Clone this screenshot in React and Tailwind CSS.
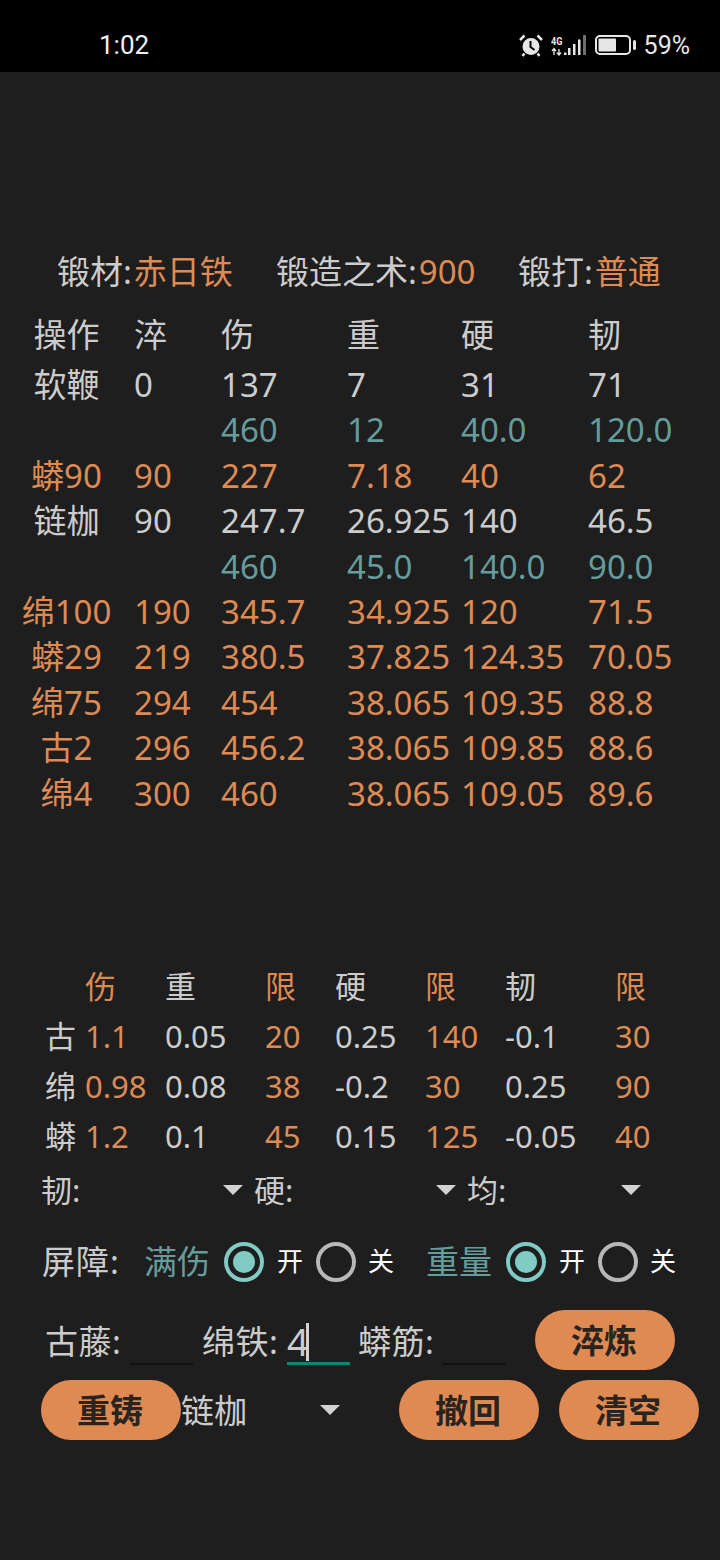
const white = "text-[#cccccc]";
const orange = "text-[#de8a52]";
const teal = "text-[#659c9c]";

const rows = [
  { color: white, h: "h-[50px]", cells: ["操作", "淬", "伤", "重", "硬", "韧"] },
  { color: white, cells: ["软鞭", "0", "137", "7", "31", "71"] },
  { color: teal, cells: ["", "", "460", "12", "40.0", "120.0"] },
  { color: orange, cells: ["蟒90", "90", "227", "7.18", "40", "62"] },
  { color: white, cells: ["链枷", "90", "247.7", "26.925", "140", "46.5"] },
  { color: teal, cells: ["", "", "460", "45.0", "140.0", "90.0"] },
  { color: orange, cells: ["绵100", "190", "345.7", "34.925", "120", "71.5"] },
  { color: orange, cells: ["蟒29", "219", "380.5", "37.825", "124.35", "70.05"] },
  { color: orange, cells: ["绵75", "294", "454", "38.065", "109.35", "88.8"] },
  { color: orange, cells: ["古2", "296", "456.2", "38.065", "109.85", "88.6"] },
  { color: orange, cells: ["绵4", "300", "460", "38.065", "109.05", "89.6"] },
];

const limits = [
  ["", "伤", "重", "限", "硬", "限", "韧", "限"],
  ["古", "1.1", "0.05", "20", "0.25", "140", "-0.1", "30"],
  ["绵", "0.98", "0.08", "38", "-0.2", "30", "0.25", "90"],
  ["蟒", "1.2", "0.1", "45", "0.15", "125", "-0.05", "40"],
];

function StatusIcons() {
  return (
    <div className="flex items-center">
      <svg width="24" height="23" viewBox="0 0 24 23" className="mr-[8px]">
        <circle cx="12" cy="12.500" r="8.500" fill="#e6e6e6" />
        <path d="M11.500 7v6l4 3" stroke="#000" strokeWidth="2" fill="none" />
        <path d="M1 6l4.500-4.500M23 6l-4.500-4.500M5.500 19.500l-2 2.500M18.500 19.500l2 2.500" stroke="#e6e6e6" strokeWidth="2.500" fill="none" />
      </svg>
      <svg width="35" height="21" viewBox="0 0 35 21" className="mr-[9px]">
        <text x="0" y="9.500" fontSize="11" fontWeight="700" fill="#e6e6e6" textLength="11.500" lengthAdjust="spacingAndGlyphs" fontFamily="Roboto, sans-serif">4G</text>
        <path d="M3 20v-6M1 16l2-2.500 2 2.500M8 14v6M6 17.500l2 2.500 2-2.500" stroke="#e6e6e6" strokeWidth="1.300" fill="none" />
        <rect x="13" y="17.500" width="2.500" height="2.500" fill="#e6e6e6" />
        <rect x="17" y="13" width="2.500" height="7" fill="#e6e6e6" />
        <rect x="22" y="9" width="2.500" height="11" fill="#e6e6e6" />
        <rect x="27" y="4.500" width="2.500" height="15.500" fill="#e6e6e6" />
        <rect x="32" y="0" width="3" height="20" fill="#6e6e6e" />
      </svg>
      <svg width="41" height="20" viewBox="0 0 41 20" className="mr-[8px]">
        <rect x="1" y="1" width="34" height="18" rx="4" fill="none" stroke="#e6e6e6" strokeWidth="2" />
        <rect x="3.500" y="3.500" width="17.500" height="13" rx="1" fill="#e6e6e6" />
        <rect x="38" y="5" width="3" height="10" rx="1.500" fill="#e6e6e6" />
      </svg>
      <span className="text-[25px] leading-none text-[#e6e6e6] font-['Roboto',sans-serif]">59%</span>
    </div>
  );
}

function Caret({ className }) {
  return <div className={`w-0 h-0 border-x-[10px] border-x-transparent border-t-[10px] border-t-[#d2d2d2] ${className}`} />;
}

function Radio({ on }) {
  return (
    <div className={`w-[40px] h-[40px] rounded-full border-[4px] flex items-center justify-center ${on ? "border-[#80cbc4]" : "border-[#b8b8b8]"}`}>
      {on && <div className="w-[22px] h-[22px] rounded-full bg-[#80cbc4]" />}
    </div>
  );
}

function Field({ label, value, active, className }) {
  return (
    <div className={`flex items-center ${className}`}>
      <span className={`w-[84px] text-[33px] leading-[40px] ${white} mt-[4px] tracking-[0.5px] -ml-[1px] mr-[1px]`}>{label}</span>
      <div className={`relative w-[63px] h-[44px] mt-[6px] text-[38px] leading-[40px] ${white} ${active ? "border-b-[3px] border-[#12857a]" : "border-b-2 border-[#111111]"}`}>
        {value}
        {active && <div className="absolute left-[19px] top-[2px] w-[3px] h-[38px] bg-[#d2d2d2]" />}
      </div>
    </div>
  );
}

function Btn({ children, className }) {
  return (
    <div className={`w-[140px] h-[60px] rounded-full bg-[#de8a52] flex items-center justify-center pt-[2px] pr-[2px] text-[33px] font-bold text-[#292420] ${className}`}>
      {children}
    </div>
  );
}

export default function App() {
  return (
    <div className="w-[720px] h-[1560px] bg-[#1e1e1e] font-['Noto_Sans','Noto_Sans_CJK_SC',sans-serif] font-normal">
      <div className="h-[72px] bg-black flex items-center justify-between pl-[99px] pr-[30px] pt-[18px]">
        <span className="text-[26px] text-[#f0f0f0] font-['Roboto',sans-serif] font-normal mt-[1px]">1:02</span>
        <StatusIcons />
      </div>

      <div className={`pt-[177px] pl-[57px] flex text-[33px] leading-[45px] ${white}`}>
        <div className="w-[219px]">锻材:<span className={`ml-[2px] ${orange}`}>赤日铁</span></div>
        <div className="w-[242px]">锻造之术:<span className={`ml-[2px] ${orange}`}>900</span></div>
        <div>锻打:<span className={`ml-[2px] ${orange}`}>普通</span></div>
      </div>

      <div className="mt-[16px] text-[33px]">
        {rows.map((row, i) => (
          <div key={i} className={`grid grid-cols-[134px_87px_126px_114px_127px_1fr] items-center ${row.h || "h-[45.4px]"} ${row.color}`}>
            {row.cells.map((c, j) => (
              <div key={j} className={`whitespace-nowrap ${j === 0 ? "text-center pr-[1px]" : ""}`}>{c}</div>
            ))}
          </div>
        ))}
      </div>

      <div className="mt-[147px] ml-[45px] text-[31px]">
        {limits.map((row, i) => (
          <div key={i} className="grid grid-cols-[40px_80px_100px_70px_90px_80px_110px_1fr] items-center h-[50px]">
            {row.map((c, j) => (
              <div key={j} className={j === 1 || j === 3 || j === 5 || j === 7 ? orange : white}>{c}</div>
            ))}
          </div>
        ))}
      </div>

      <div className={`flex items-center h-[44px] mt-[7px] pl-[41px] text-[31px] ${white}`}>
        <span className="w-[182px]">韧:</span>
        <Caret />
        <span className="w-[182px] ml-[11px]">硬:</span>
        <Caret />
        <span className="w-[154px] ml-[11px]">均:</span>
        <Caret />
      </div>

      <div className="flex items-center h-[50px] mt-[25px] pl-[42px] text-[33px]">
        <span className={`w-[102px] tracking-[1px] ${white}`}>屏障:</span>
        <span className={`w-[80px] ${teal}`}>满伤</span>
        <Radio on />
        <span className="w-[39px] ml-[13px] text-[26px] text-white">开</span>
        <Radio />
        <span className="w-[33px] ml-[12px] text-[26px] text-white">关</span>
        <span className={`w-[80px] ml-[25px] ${teal}`}>重量</span>
        <Radio on />
        <span className="w-[39px] ml-[13px] text-[26px] text-white">开</span>
        <Radio />
        <span className="ml-[12px] text-[26px] text-white">关</span>
      </div>

      <div className="flex items-center h-[60px] mt-[23px] pl-[46px]">
        <Field label="古藤:" />
        <Field label="绵铁:" value="4" active className="ml-[10px]" />
        <Field label="蟒筋:" className="ml-[9px]" />
        <Btn className="ml-[29px]">淬炼</Btn>
      </div>

      <div className="flex items-center h-[60px] mt-[10px] pl-[41px]">
        <Btn>重铸</Btn>
        <span className={`w-[139px] text-[33px] pt-[2px] ${white}`}>链枷</span>
        <Caret />
        <Btn className="ml-[59px]">撤回</Btn>
        <Btn className="ml-[20px]">清空</Btn>
      </div>
    </div>
  );
}
